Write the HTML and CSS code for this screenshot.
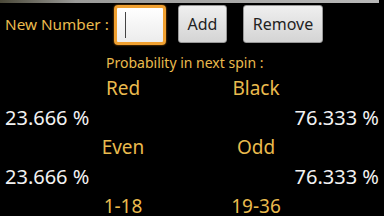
FILE: index.html
```html
<!DOCTYPE html>
<html lang="en">
<head>
    <meta charset="UTF-8">
    <title>Roulette</title>
    <link rel="stylesheet" href="styles.css">
</head>
<body>
    <div class="top-bar"></div>

    <div class="input-row">
        <label class="new-label" for="new-number">New Number :</label>
        <div class="number-box">
            <span class="caret"></span>
        </div>
        <button class="btn add-btn">Add</button>
        <button class="btn remove-btn">Remove</button>
    </div>

    <div class="title">Probability in next spin :</div>

    <div class="grid">
        <div class="label col-a">Red</div>
        <div class="label col-b">Black</div>
        <div class="pct left">23.666 %</div>
        <div class="pct right">76.333 %</div>

        <div class="label col-a">Even</div>
        <div class="label col-b">Odd</div>
        <div class="pct left">23.666 %</div>
        <div class="pct right">76.333 %</div>

        <div class="label col-a">1-18</div>
        <div class="label col-b">19-36</div>
    </div>
</body>
</html>
```

FILE: styles.css
```css
body {
    margin: 0;
    width: 384px;
    height: 216px;
    overflow: hidden;
    background-color: #000;
    font-family: "Noto Sans", "Open Sans", sans-serif;
    color: #eabb4e;
}

.top-bar {
    width: 379px;
    height: 3px;
    background: linear-gradient(to right, #4a4838, #9a9a98 20%, #b8b8b8);
}

.input-row {
    display: flex;
    align-items: center;
    height: 42px;
    padding-left: 5px;
}

.new-label {
    font-size: 15.3px;
    width: 109px;
}

.number-box {
    width: 46px;
    height: 34px;
    border: 3px solid #f0a030;
    border-radius: 4px;
    background: linear-gradient(to bottom, #ffffff, #ececec);
    box-shadow: 0 0 2px #c07010;
    margin-top: 2px;
    display: flex;
    align-items: center;
}

.caret {
    width: 1px;
    height: 26px;
    margin-left: 8px;
    background-color: #444;
}

.btn {
    height: 38px;
    border: 1px solid #999;
    border-radius: 3px;
    background: linear-gradient(to bottom, #efefef, #d4d4d4);
    font-family: "Noto Sans", "Open Sans", sans-serif;
    font-size: 16px;
    color: #222;
    padding: 0;
}

.add-btn {
    width: 49px;
    margin-left: 12px;
}

.remove-btn {
    width: 80px;
    margin-left: 16px;
}

.title {
    font-size: 14px;
    line-height: 20px;
    margin-top: 8px;
    padding-left: 106px;
}

.grid {
    display: grid;
    grid-template-columns: 98px 50px 78px 60px 1fr;
    grid-auto-rows: 29.5px;
    align-items: center;
    font-size: 19px;
    margin-top: 0;
}

.label {
    text-align: center;
}

.col-a {
    grid-column: 2;
}

.col-b {
    grid-column: 4;
}

.pct {
    color: #f2f2f2;
    font-size: 20px;
}

.pct.left {
    grid-column: 1 / 3;
    padding-left: 5px;
}

.pct.right {
    grid-column: 4 / 6;
    text-align: right;
    padding-right: 5px;
}
```
